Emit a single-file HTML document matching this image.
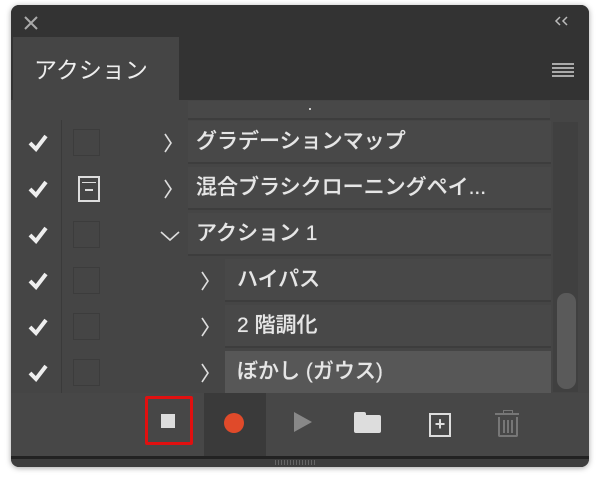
<!DOCTYPE html>
<html><head><meta charset="utf-8"><style>
body{margin:0;width:600px;height:483px;background:#fff;position:relative;overflow:hidden;font-family:"Liberation Sans","Noto Sans CJK JP",sans-serif;color:#e6e6e6}
.a{position:absolute}
.win{left:11px;top:5px;width:578px;height:462px;background:#454545;border-radius:8px;overflow:hidden;box-shadow:0 1px 6px rgba(0,0,0,.35)}
.row{position:absolute;left:0;width:578px;height:46px}
.chk{position:absolute;left:17px;top:14px}
.sq{position:absolute;left:62px;top:9px;width:27px;height:27px;border:1px solid #3c3c3c;box-sizing:border-box}
.name{position:absolute;height:43px;top:1px;background:#484848;border-bottom:2px solid #3d3d3d;box-sizing:border-box;font-size:21px;line-height:41px;padding-left:8px;right:38px;white-space:nowrap;font-weight:500;text-shadow:0 0 0.5px #eee}
.car{position:absolute;top:14px}
</style></head><body>
<div class="a win">
 <div class="a" style="left:0;top:0;width:578px;height:95px;background:#333"></div>
 <svg class="a" style="left:13px;top:11px" width="14" height="14"><path d="M1 1L13 13M13 1L1 13" stroke="#aaa" stroke-width="2"/></svg>
 <svg class="a" style="left:543px;top:11px" width="16" height="10"><path d="M6 1L2 5L6 9M13 1L9 5L13 9" stroke="#bbb" stroke-width="1.5" fill="none"/></svg>
 <div class="a" style="left:2px;top:32px;width:166px;height:64px;background:#454545"></div>
 <div class="a" style="left:23px;top:46px;font-size:23px;color:#eee">アクション</div>
 <div class="a" style="left:541px;top:58px;width:22px;height:2px;background:#aaa;box-shadow:0 4px #aaa,0 8px #aaa,0 12px #aaa"></div>
 <div class="a" style="left:50px;top:115px;width:1px;height:273px;background:#3a3a3a"></div>
 <div class="a" style="left:177px;top:96px;width:362px;height:17px;background:#484848;border-bottom:2px solid #3d3d3d"></div>
 <div class="a" style="left:298px;top:103px;width:2px;height:2px;background:#ccc"></div>
 <div class="a" style="left:542px;top:117px;width:25px;height:270px;background:#404040"></div>
 <div class="a" style="left:546px;top:288px;width:19px;height:96px;background:#5a5a5a;border-radius:9px"></div>

 <div class="row" style="top:115px"><svg class="chk" width="20" height="18"><path d="M2 9L8 15L18 2" stroke="#eee" stroke-width="4" fill="none"/></svg><div class="sq"></div><svg class="car" style="left:152px;top:13px" width="10" height="20"><path d="M2 1L8 10L2 19" stroke="#ddd" stroke-width="1.6" fill="none"/></svg><div class="name" style="left:177px">グラデーションマップ</div></div>
 <div class="row" style="top:161px"><svg class="chk" width="20" height="18"><path d="M2 9L8 15L18 2" stroke="#eee" stroke-width="4" fill="none"/></svg><div class="sq" style="border:2px solid #ddd;width:22px;height:26px;left:67px;top:10px"><div class="a" style="left:2px;top:4px;width:14px;height:1px;background:#ddd"></div><div class="a" style="left:5px;top:11px;width:8px;height:2px;background:#ddd"></div></div><svg class="car" style="left:152px;top:13px" width="10" height="20"><path d="M2 1L8 10L2 19" stroke="#ddd" stroke-width="1.6" fill="none"/></svg><div class="name" style="left:177px">混合ブラシクローニングペイ...</div></div>
 <div class="row" style="top:207px"><svg class="chk" width="20" height="18"><path d="M2 9L8 15L18 2" stroke="#eee" stroke-width="4" fill="none"/></svg><div class="sq"></div><svg class="car" style="left:149px;top:18px" width="20" height="12"><path d="M1 2L10 10L19 2" stroke="#ddd" stroke-width="1.6" fill="none"/></svg><div class="name" style="left:177px">アクション 1</div></div>
 <div class="row" style="top:253px"><svg class="chk" width="20" height="18"><path d="M2 9L8 15L18 2" stroke="#eee" stroke-width="4" fill="none"/></svg><div class="sq"></div><svg class="car" style="left:189px;top:13px" width="10" height="20"><path d="M2 1L8 10L2 19" stroke="#ddd" stroke-width="1.6" fill="none"/></svg><div class="name" style="left:214px;padding-left:12px">ハイパス</div></div>
 <div class="row" style="top:299px"><svg class="chk" width="20" height="18"><path d="M2 9L8 15L18 2" stroke="#eee" stroke-width="4" fill="none"/></svg><div class="sq"></div><svg class="car" style="left:189px;top:13px" width="10" height="20"><path d="M2 1L8 10L2 19" stroke="#ddd" stroke-width="1.6" fill="none"/></svg><div class="name" style="left:214px;padding-left:12px">2 階調化</div></div>
 <div class="row" style="top:345px"><svg class="chk" width="20" height="18"><path d="M2 9L8 15L18 2" stroke="#eee" stroke-width="4" fill="none"/></svg><div class="sq"></div><svg class="car" style="left:189px;top:13px" width="10" height="20"><path d="M2 1L8 10L2 19" stroke="#ddd" stroke-width="1.6" fill="none"/></svg><div class="name" style="left:214px;padding-left:12px;background:#575757;border-bottom:none">ぼかし (ガウス)</div></div>

 <div class="a" style="left:0;top:388px;width:578px;height:63px;background:#474747"></div>
 <div class="a" style="left:193px;top:388px;width:62px;height:63px;background:#3a3a3a"></div>
 <div class="a" style="left:134px;top:391px;width:42px;height:43px;border:3px solid #e01010;border-radius:2px"></div>
 <div class="a" style="left:150px;top:409px;width:14px;height:14px;background:#ddd"></div>
 <div class="a" style="left:213px;top:408px;width:20px;height:20px;border-radius:50%;background:#e04a2a"></div>
 <div class="a" style="left:283px;top:407px;width:0;height:0;border-left:18px solid #888;border-top:10px solid transparent;border-bottom:10px solid transparent"></div>
 <div class="a" style="left:343px;top:410px;width:27px;height:18px;background:#ddd;border-radius:2px"></div>
 <div class="a" style="left:343px;top:407px;width:12px;height:5px;background:#ddd;border-radius:2px 2px 0 0"></div>
 <div class="a" style="left:418px;top:408px;width:18px;height:20px;border:2px solid #ddd;font-size:18px;line-height:19px;text-align:center;color:#ddd;font-weight:bold">+</div>
 <div class="a" style="left:487px;top:412px;width:16px;height:18px;border:2px solid #777;border-top:none;border-radius:0 0 2px 2px"></div>
 <div class="a" style="left:484px;top:408px;width:24px;height:2px;background:#777"></div>
 <div class="a" style="left:492px;top:405px;width:8px;height:3px;border:1px solid #777;border-bottom:none"></div>
 <div class="a" style="left:492px;top:415px;width:2px;height:13px;background:#777;box-shadow:4px 0 #777,8px 0 #777"></div>
 <div class="a" style="left:0;top:451px;width:578px;height:3px;background:#222"></div>
 <div class="a" style="left:0;top:454px;width:578px;height:8px;background:#3e3e3e"></div>
 <div class="a" style="left:264px;top:455px;width:40px;height:5px;background:repeating-linear-gradient(90deg,#666 0 1px,transparent 1px 3px)"></div>
</div>
</body></html>
